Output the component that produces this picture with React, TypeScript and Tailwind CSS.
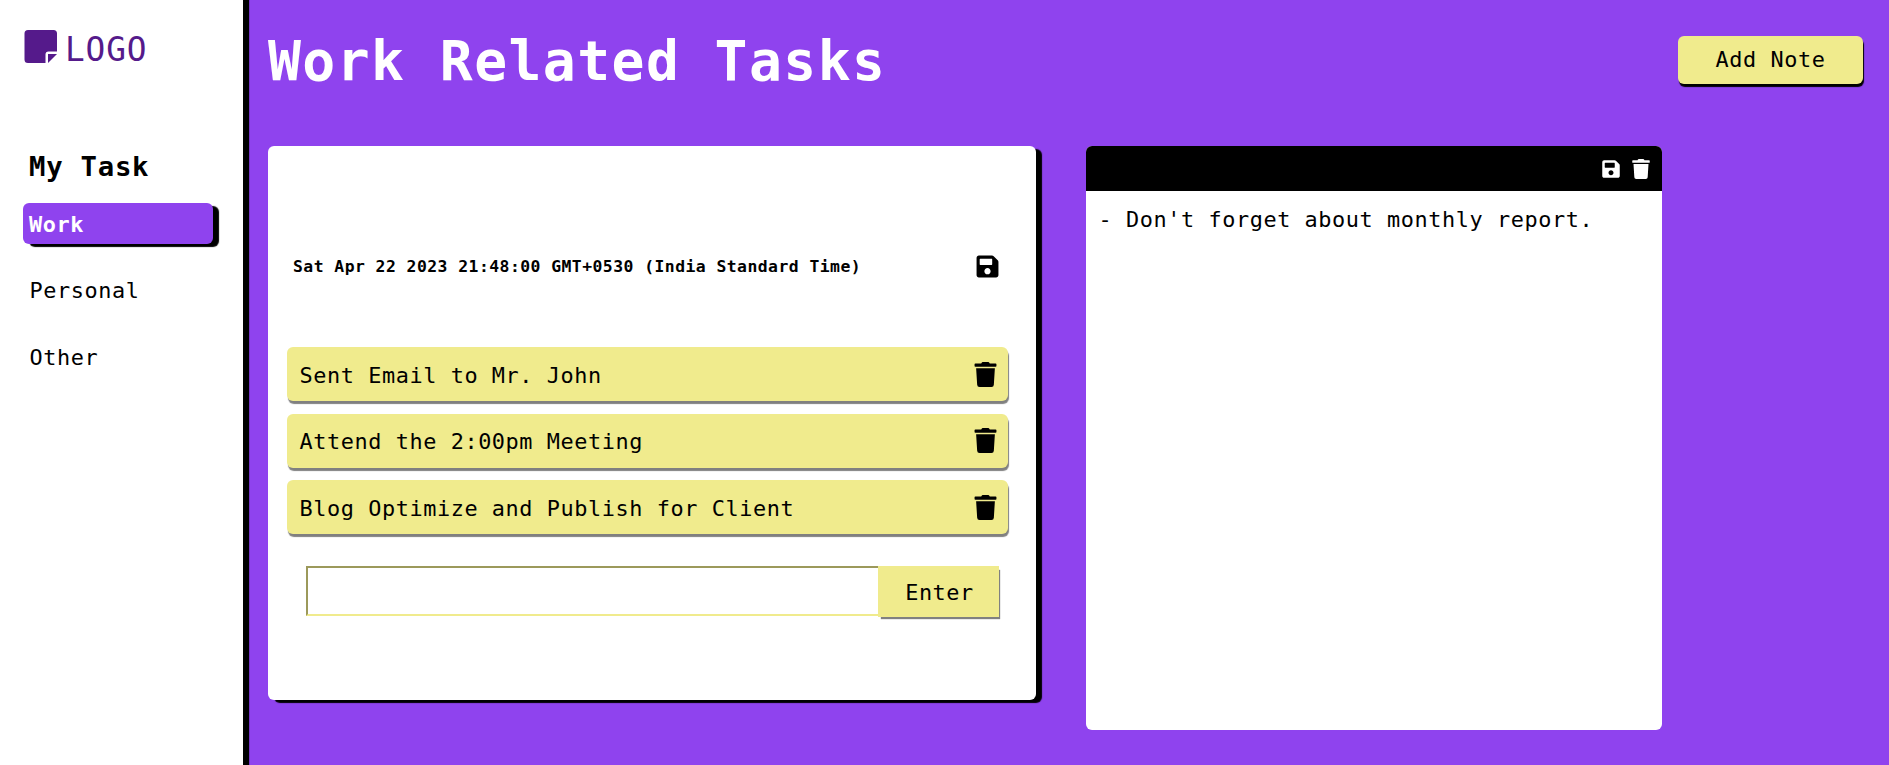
import { FaSave, FaTrash } from "react-icons/fa";

const tasks = [
  "Sent Email to Mr. John",
  "Attend the 2:00pm Meeting",
  "Blog Optimize and Publish for Client",
];

function Sidebar() {
  return (
    <aside className="relative z-10 h-full w-[243px] shrink-0 bg-white px-[23px] shadow-[6px_0_1px_black]">
      <div className="flex h-[98px] items-start pt-[30px] pl-px text-[#551a8b]">
        <svg className="h-[33px] w-[33px] shrink-0" viewBox="0 0 33 33" fill="currentColor">
          <path d="M4 0H29.500A3.500 3.500 0 0 1 33 3.500V21.500H24.500A3 3 0 0 0 21.500 24.500V33H4A3.500 3.500 0 0 1 .5 29.500V3.500A3.500 3.500 0 0 1 4 0Z" />
          <path d="M24 24H33L24 33Z" />
        </svg>
        <span className="ml-[8px] text-[32.8px] leading-[40px] tracking-[0.87px]">LOGO</span>
      </div>
      <h2 className="mt-[48px] h-[57px] pl-[6px] text-[27.3px] leading-[41px] font-bold tracking-[0.75px]">My Task</h2>
      <nav className="flex flex-col gap-[25.5px]">
        <a className="block h-[41px] w-[190px] rounded-[6px] bg-[#8f43ee] pt-px pl-[6px] leading-[41px] font-bold text-white shadow-[6px_3px_1px_black]">
          Work
        </a>
        <a className="block h-[41px] pl-[6.500px] leading-[41px]">Personal</a>
        <a className="block h-[41px] pt-px pl-[6.500px] leading-[41px]">Other</a>
      </nav>
    </aside>
  );
}

function TaskCard() {
  return (
    <section className="h-[554px] w-[768px] shrink-0 rounded-[6px] bg-white pl-[19px] shadow-[6px_3px_1px_black]">
      <div className="flex h-[201px] w-[712px] items-center justify-between pt-[40px] pl-[6px]">
        <span className="text-[16.4px] font-bold tracking-[0.46px] whitespace-nowrap">
          Sat Apr 22 2023 21:48:00 GMT+0530 (India Standard Time)
        </span>
        <FaSave className="size-[25px] translate-x-px" />
      </div>
      <ul className="flex flex-col gap-[12.5px]">
        {tasks.map((task) => (
          <li
            key={task}
            className="flex h-[54px] w-[721px] items-center justify-between rounded-[6px] bg-[#f0eb8d] pr-[10px] pl-[12.5px] shadow-[1px_3px_1px_gray]"
          >
            <span className="pt-[3px]">{task}</span>
            <FaTrash className="size-[25px]" />
          </li>
        ))}
      </ul>
      <div className="mt-[32px] flex items-start pl-[19px]">
        <input className="h-[50px] w-[574px] border-2 border-[#f0eb8d] px-2 outline-none [border-style:inset]" />
        <button className="-ml-[2px] h-[51px] w-[121px] bg-[#f0eb8d] pt-[3px] pl-[2px] tracking-[0.58px] shadow-[2px_3px_1px_-1px_gray]">
          Enter
        </button>
      </div>
    </section>
  );
}

function NoteCard() {
  return (
    <section className="h-[584px] w-[576px] shrink-0 overflow-hidden rounded-[6px] bg-white">
      <header className="flex h-[45px] items-center justify-end gap-[10px] bg-black pr-[11px] text-white">
        <FaSave className="size-[20px]" />
        <FaTrash className="size-[20px]" />
      </header>
      <p className="pt-[13px] pl-[12.5px] leading-[32px]">- Don't forget about monthly report.</p>
    </section>
  );
}

export default function App() {
  return (
    <div className="flex h-[765px] w-full overflow-hidden bg-[#8f43ee] font-['DejaVu_Sans_Mono',monospace] text-[21.875px] leading-[32px] tracking-[0.58px] text-black">
      <Sidebar />
      <main className="flex-1 pl-[25px]">
        <header className="flex h-[146px] items-start justify-between pr-[26px]">
          <h1 className="pt-[25px] text-[54.7px] leading-[72px] font-bold tracking-[1.43px] text-white">
            Work Related Tasks
          </h1>
          <button className="mt-[36px] h-[48px] w-[185px] rounded-[6px] bg-[#f0eb8d] tracking-[0.58px] shadow-[1px_3px_1px_black]">
            Add Note
          </button>
        </header>
        <div className="flex items-start gap-[50px]">
          <TaskCard />
          <NoteCard />
        </div>
      </main>
    </div>
  );
}
